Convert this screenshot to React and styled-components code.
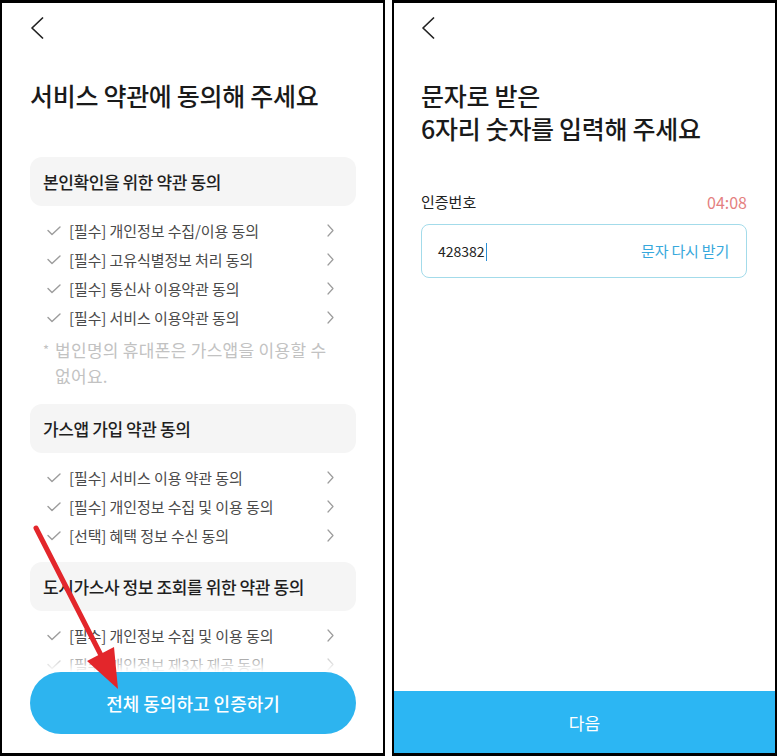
import styled, { createGlobalStyle } from 'styled-components'

const GlobalStyle = createGlobalStyle`
  html, body {
    margin: 0;
    padding: 0;
    background: #ffffff;
  }
  body {
    font-family: "Noto Sans CJK KR", "Noto Sans", sans-serif;
    color: #1d1d1d;
  }
`

const Page = styled.div`
  position: relative;
  width: 779px;
  height: 756px;
  display: flex;
  gap: 7px;
`

const Frame = styled.div`
  position: relative;
  box-sizing: border-box;
  width: 385px;
  height: 756px;
  border: 2px solid #000;
  border-top-width: 3px;
  border-bottom-width: 3px;
  background: #fff;
  display: flex;
  flex-direction: column;
  overflow: hidden;
`

const TopBar = styled.div`
  padding: 14px 0 0 ${({ $inset }) => $inset}px;
  height: 22px;
  color: #222;
`

const Title = styled.h1`
  margin: ${({ $top }) => $top}px 0 0;
  padding-left: ${({ $inset }) => $inset}px;
  font-size: 25px;
  line-height: ${({ $lh }) => $lh}px;
  font-weight: 500;
  letter-spacing: -0.3px;
  color: #1a1a1a;
`

const Scroll = styled.div`
  flex: 1;
  overflow: hidden;
  padding: 0 27px 0 28px;
`

const SectionBox = styled.div`
  margin-top: ${({ $top }) => $top}px;
  height: 49px;
  display: flex;
  align-items: center;
  padding-left: 13px;
  border-radius: 12px;
  background: #f5f5f5;
  font-size: 17px;
  font-weight: 500;
  letter-spacing: -0.4px;
  color: #1f1f1f;
`

const Items = styled.ul`
  list-style: none;
  margin: 10px 0 0;
  padding: 0;
`

const Item = styled.li`
  height: 29px;
  display: flex;
  align-items: center;
  padding-left: 17px;
  padding-right: 22px;
  font-size: 15px;
  color: #4a4a4a;
  letter-spacing: -0.1px;
  span {
    flex: 1;
    margin-left: 8px;
  }
`

const Note = styled.p`
  margin: 5px 0 15px;
  padding-left: 13px;
  display: flex;
  font-size: 17px;
  line-height: 26px;
  color: #c2c2c2;
  letter-spacing: 0.3px;
  b {
    font-weight: 400;
    width: 12px;
    flex: none;
    font-size: 13px;
  }
`

const Footer = styled.div`
  position: relative;
  padding: 0 27px 19px 28px;
  &::before {
    content: '';
    position: absolute;
    left: 0;
    right: 0;
    top: -22px;
    height: 22px;
    background: linear-gradient(rgba(255, 255, 255, 0.2), #fff);
  }
`

const PillButton = styled.button`
  display: block;
  width: 100%;
  height: 62px;
  border: 0;
  border-radius: 31px;
  background: #2db4ef;
  color: #fff;
  font-family: inherit;
  font-size: 18px;
  font-weight: 500;
  letter-spacing: 0;
`

const Form = styled.div`
  flex: 1;
  padding: 0 28px 0 27px;
`

const LabelRow = styled.div`
  margin-top: 46px;
  display: flex;
  justify-content: space-between;
  align-items: center;
  line-height: 22px;
  font-size: 15px;
  color: #222;
`

const Timer = styled.span`
  color: #e47f7f;
  font-size: 16px;
`

const InputBox = styled.div`
  margin-top: 11px;
  height: 54px;
  box-sizing: border-box;
  border: 1px solid #a3dbea;
  border-radius: 8px;
  display: flex;
  align-items: center;
  justify-content: space-between;
  padding: 0 17px 0 16px;
  font-size: 14px;
  color: #222;
`

const Caret = styled.i`
  display: inline-block;
  width: 1.5px;
  height: 18px;
  margin-left: 1px;
  vertical-align: -4px;
  background: #2a8fd6;
`

const Resend = styled.span`
  color: #37a8dc;
  font-size: 15px;
  letter-spacing: -0.2px;
`

const BarButton = styled.button`
  height: 62px;
  width: 100%;
  border: 0;
  background: #2cb6f3;
  color: #fff;
  font-family: inherit;
  font-size: 17px;
`

const Arrow = styled.svg`
  position: absolute;
  left: 0;
  top: 0;
  pointer-events: none;
`

const Back = () => (
  <svg width="14" height="22" viewBox="0 0 14 22" fill="none">
    <path d="M12.5 1 L2 11 L12.5 21" stroke="currentColor" strokeWidth="1.7" strokeLinecap="round" strokeLinejoin="round" />
  </svg>
)

const Check = () => (
  <svg width="14" height="10" viewBox="0 0 14 10" fill="none">
    <path d="M1 4.5 L5 8.5 L13 1" stroke="#9c9c9c" strokeWidth="1.4" strokeLinecap="round" strokeLinejoin="round" />
  </svg>
)

const Next = () => (
  <svg width="7" height="13" viewBox="0 0 7 13" fill="none">
    <path d="M1 1 L6 6.5 L1 12" stroke="#9c9c9c" strokeWidth="1.2" strokeLinecap="round" strokeLinejoin="round" />
  </svg>
)

const sections = [
  {
    title: '본인확인을 위한 약관 동의',
    top: 46,
    items: [
      '[필수] 개인정보 수집/이용 동의',
      '[필수] 고유식별정보 처리 동의',
      '[필수] 통신사 이용약관 동의',
      '[필수] 서비스 이용약관 동의',
    ],
    note: true,
  },
  {
    title: '가스앱 가입 약관 동의',
    top: 0,
    items: [
      '[필수] 서비스 이용 약관 동의',
      '[필수] 개인정보 수집 및 이용 동의',
      '[선택] 혜택 정보 수신 동의',
    ],
  },
  {
    title: '도시가스사 정보 조회를 위한 약관 동의',
    top: 12,
    items: ['[필수] 개인정보 수집 및 이용 동의', '[필수] 개인정보 제3자 제공 동의'],
  },
]

const App = () => {
  return (
    <Page>
      <GlobalStyle />
      <Frame>
        <TopBar $inset={28}>
          <Back />
        </TopBar>
        <Title $inset={28} $top={40} $lh={32}>
          서비스 약관에 동의해 주세요
        </Title>
        <Scroll>
          {sections.map((s) => (
            <div key={s.title}>
              <SectionBox $top={s.top}>{s.title}</SectionBox>
              <Items>
                {s.items.map((t) => (
                  <Item key={t}>
                    <Check />
                    <span>{t}</span>
                    <Next />
                  </Item>
                ))}
              </Items>
              {s.note && (
                <Note>
                  <b>*</b>
                  <span>
                    법인명의 휴대폰은 가스앱을 이용할 수
                    <br />
                    없어요.
                  </span>
                </Note>
              )}
            </div>
          ))}
        </Scroll>
        <Footer>
          <PillButton>전체 동의하고 인증하기</PillButton>
        </Footer>
      </Frame>
      <Frame>
        <TopBar $inset={27}>
          <Back />
        </TopBar>
        <Title $inset={27} $top={39.5} $lh={33}>
          문자로 받은
          <br />
          6자리 숫자를 입력해 주세요
        </Title>
        <Form>
          <LabelRow>
            <span>인증번호</span>
            <Timer>04:08</Timer>
          </LabelRow>
          <InputBox>
            <span>
              428382
              <Caret />
            </span>
            <Resend>문자 다시 받기</Resend>
          </InputBox>
        </Form>
        <BarButton>다음</BarButton>
      </Frame>
      <Arrow width="779" height="756" viewBox="0 0 779 756">
        <line x1="36" y1="528" x2="106" y2="665" stroke="#e3262b" strokeWidth="5" strokeLinecap="round" />
        <polygon points="118,689 114,647 87,661" fill="#e3262b" />
      </Arrow>
    </Page>
  )
}

export default App
